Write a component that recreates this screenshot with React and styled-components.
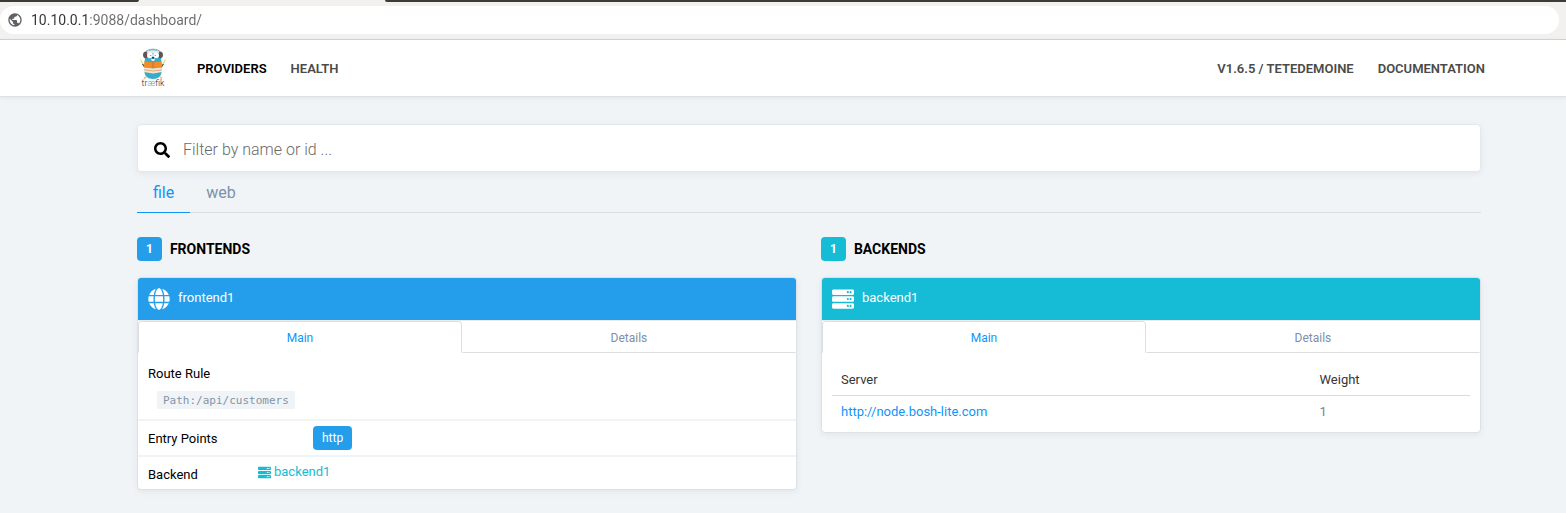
import React from "react";
import styled, { createGlobalStyle } from "styled-components";
import { FaSearch, FaServer, FaGlobe } from "react-icons/fa";
import { MdPublic } from "react-icons/md";

const BLUE = "#249eeb";
const LINK = "#0f95f9";
const TEAL = "#16bbd5";

const GlobalStyle = createGlobalStyle`
  *, *::before, *::after { box-sizing: border-box; }
  body {
    margin: 0;
    background: #f0f4f7;
    color: #000;
    font: 400 13px/20px Roboto, "Liberation Sans", sans-serif;
  }
  a { color: inherit; text-decoration: none; }
  h2, dl, dd { margin: 0; }
  button, input { font: inherit; border: 0; background: none; padding: 0; }
`;

/* Browser chrome */
const TabStrip = styled.div`
  display: flex;
  justify-content: space-between;
  height: 2px;
  background: #f2f1f0;
`;
const StripLeft = styled.div`
  width: 139px;
  background: #3c3b37;
  border-bottom-right-radius: 3px;
`;
const StripRight = styled.div`
  width: calc(100% - 385px);
  background: #3c3b37;
  border-bottom-left-radius: 3px;
`;
const AddressBar = styled.div`
  display: flex;
  height: 38px;
  padding: 4px 7px 5px 0;
  background: #f2f1f0;
  border-bottom: 1px solid #c9cbcd;
`;
const AddressField = styled.label`
  display: flex;
  flex: 1;
  align-items: center;
  gap: 8px;
  height: 28px;
  padding-left: 7px;
  background: #fff;
  border-radius: 14px;
  color: #5f6164;
`;
const AddressInput = styled.input`
  flex: 1;
  font: 400 14px/20px Roboto, "Noto Sans", sans-serif;
  color: #333;
  background: linear-gradient(to right, #333 58px, #6b6b6b 58px);
  background-clip: text;
  -webkit-text-fill-color: transparent;
  outline: 0;
`;

/* Top navigation */
const Nav = styled.nav`
  display: flex;
  align-items: center;
  height: 57px;
  padding: 0 69px 0 139px;
  background: #fff;
  border-bottom: 1px solid #dce1e5;
  box-shadow: 0 1px 4px #dfe4e8;
`;
const Brand = styled.a`
  display: flex;
  margin-right: 18px;
`;
const NavLink = styled.a`
  padding: 2px 12px 0;
  font-weight: 600;
  text-transform: uppercase;
  color: ${(p) => (p.$active ? "#000" : "#4a4a4a")};
`;
const Spacer = styled.div`
  flex: 1;
`;

/* Page */
const Main = styled.main`
  padding: 27px 85px 23px 137px;
`;
const Search = styled.label`
  display: flex;
  align-items: center;
  gap: 13px;
  height: 48px;
  padding: 4px 16px 0;
  background: #fff;
  border: 1px solid #e3e8eb;
  border-radius: 4px;
  box-shadow: 0 2px 6px #e1e6ea;
`;
const SearchInput = styled.input`
  flex: 1;
  font-size: 16px;
  font-weight: 300;
  line-height: 24px;
  outline: 0;
  &::placeholder { color: #6a6a6a; opacity: 1; }
`;
const ProviderTabs = styled.div`
  display: flex;
  border-bottom: 1px solid #d9dee2;
`;
const ProviderTab = styled.button`
  padding: 9px 16px 7px;
  margin-bottom: -1px;
  border-bottom: 1px solid ${(p) => (p.$active ? LINK : "transparent")};
  font-size: 16px;
  line-height: 24px;
  color: ${(p) => (p.$active ? LINK : "#7c90a8")};
`;
const Columns = styled.div`
  display: grid;
  grid-template-columns: 1fr 1fr;
  align-items: start;
  gap: 24px;
  padding-top: 24px;
`;
const Heading = styled.h2`
  display: flex;
  align-items: center;
  gap: 8px;
  margin-bottom: 16px;
  font-size: 14px;
  font-weight: 700;
  line-height: 24px;
  text-transform: uppercase;
`;
const Tag = styled.span`
  display: inline-block;
  padding: 0 9px;
  border-radius: 4px;
  background: ${(p) => p.$color};
  color: #fff;
  font-size: 12px;
  line-height: 24px;
`;
const Card = styled.article`
  background: #fff;
  border: 1px solid #dce1e5;
  border-radius: 4px;
  box-shadow: 0 2px 6px #e1e6ea;
  overflow: hidden;
`;
const CardHeader = styled.header`
  display: flex;
  align-items: center;
  gap: 8px;
  height: 43px;
  padding: 0 10px;
  background: ${(p) => p.$color};
  border-bottom: 1px solid #e8ecef;
  color: #fff;
`;
const CardTitle = styled.span`
  padding-bottom: 3px;
`;
const CardTabs = styled.div`
  display: flex;
`;
const CardTab = styled.button`
  flex: 1 1 auto;
  padding: 2px 12px 0;
  border: 1px solid #dbdbdb;
  border-color: ${(p) => (p.$active ? "#dce0e3 #dce0e3 transparent" : "transparent transparent #dbdfe2")};
  border-radius: ${(p) => (p.$active ? "4px 4px 0 0" : "0")};
  font-size: 12px;
  line-height: 28px;
  color: ${(p) => (p.$active ? LINK : "#7c90a8")};
`;
const Row = styled.div`
  display: flex;
  flex-direction: ${(p) => (p.$stacked ? "column" : "row")};
  align-items: ${(p) => (p.$stacked ? "flex-start" : "center")};
  gap: ${(p) => (p.$stacked ? "7px" : "0")};
  padding: ${(p) => (p.$stacked ? "9px 10px 10px" : "5px 10px")};
  & + & { border-top: 2px solid #f0f4f7; }
  &:last-child { padding-bottom: 3px; }
`;
const Term = styled.dt`
  width: ${(p) => p.$width || "auto"};
  padding-top: 2px;
`;
const Code = styled.code`
  display: block;
  margin-left: 9px;
  padding: 2px 6px 0;
  background: #f0f4f7;
  color: #8393a7;
  font: 11px/16px "DejaVu Sans Mono", monospace;
`;
const BackendLink = styled.a`
  display: flex;
  align-items: center;
  gap: 3px;
  padding-bottom: 4px;
  color: ${TEAL};
`;
const TableWrap = styled.div`
  padding: 10px 10px 4px;
`;
const Table = styled.table`
  width: 100%;
  table-layout: fixed;
  border-collapse: collapse;
  text-align: left;
`;
const Th = styled.th`
  width: ${(p) => p.$width};
  padding: 7px 9px 5px;
  border-bottom: 1px solid #dbdbdb;
  font-weight: 400;
  color: #363636;
`;
const Td = styled.td`
  padding: 6px 9px;
  color: #7c8590;
  a { color: ${LINK}; }
`;

const Logo = () => (
  <svg width="28" height="40" viewBox="0 0 28 40" role="img" aria-label="træfik">
    <path d="M7 29 5 30.500M21 29l2 1.500" stroke="#f3b98a" strokeWidth="1.600" />
    <path d="M14 1.500c6 0 8 4.500 8.200 10.500l.4 11.500c0 4.500-3.400 7.500-8.600 7.500s-8.600-3-8.600-7.500L5.800 12C6 6 8 1.500 14 1.500Z" fill="#36acc9" />
    <path d="M1.500 11.500 4.500 17M26.500 11.500 23.500 17" stroke="#dce36a" strokeWidth="1.200" />
    <path d="m3.500 16 2.500 3.500M24.500 16 22 19.500" stroke="#444" strokeWidth="1.200" />
    <path d="M6.500 4C9 .3 19 .3 21.500 4" fill="none" stroke="#999" strokeWidth="1" />
    <path d="M7.500 4C10 1.800 18 1.800 20.500 4L19 5.500H9Z" fill="#dfe8ec" />
    <path d="M4 7c0-3 2-4 4-3.500L7.600 10C5.500 10.500 4 9.500 4 7ZM24 7c0-3-2-4-4-3.500l.4 6.500C22.500 10.500 24 9.500 24 7Z" fill="#5b5658" />
    <path d="M7.700 6v4M20.300 6v4" stroke="#aa2b35" strokeWidth="1" />
    <circle cx="10.900" cy="7.300" r="2.900" fill="#fff" />
    <circle cx="17.100" cy="7.300" r="2.900" fill="#fff" />
    <circle cx="11.800" cy="7.600" r=".5" fill="#555" />
    <circle cx="16.200" cy="7.600" r=".5" fill="#555" />
    <ellipse cx="14" cy="11.500" rx="1.800" ry="1.500" fill="#f4f1ea" />
    <ellipse cx="14" cy="9.900" rx="1.300" ry=".8" fill="#222" />
    <path d="M5.300 13 14 14.500 22.700 13l.2 6.500L14 20.500 5.100 19.500Z" fill="#f28c28" />
    <path d="M14 14.500v6" stroke="#c9701f" />
    <path d="M5 19.500 14 20.500l9-1v4.500L14 25.500 5 24Z" fill="#f3e6d8" />
    <path d="M5.200 21.800 14 23l8.800-1.200" stroke="#eda56c" strokeWidth="1" fill="none" />
    <text x="14" y="38" textAnchor="middle" fontFamily="Roboto, sans-serif" fontSize="9" fontWeight="300" fill="#222">
      tr<tspan fill="#36acc9">æ</tspan>fik
    </text>
  </svg>
);

const CardTabBar = () => (
  <CardTabs role="tablist">
    <CardTab role="tab" aria-selected="true" $active>Main</CardTab>
    <CardTab role="tab" aria-selected="false">Details</CardTab>
  </CardTabs>
);

export default function App() {
  return (
    <>
      <GlobalStyle />
      <TabStrip>
        <StripLeft />
        <StripRight />
      </TabStrip>
      <AddressBar>
        <AddressField>
          <MdPublic size={16} aria-hidden="true" />
          <AddressInput aria-label="Address" defaultValue="10.10.0.1:9088/dashboard/" />
        </AddressField>
      </AddressBar>
      <Nav>
        <Brand href="#home"><Logo /></Brand>
        <NavLink href="#providers" $active>Providers</NavLink>
        <NavLink href="#health">Health</NavLink>
        <Spacer />
        <NavLink href="#version">V1.6.5 / tetedemoine</NavLink>
        <NavLink href="#docs">Documentation</NavLink>
      </Nav>
      <Main>
        <Search>
          <FaSearch size={16} aria-hidden="true" />
          <SearchInput type="text" aria-label="Filter" placeholder="Filter by name or id ..." />
        </Search>
        <ProviderTabs role="tablist">
          <ProviderTab role="tab" aria-selected="true" $active>file</ProviderTab>
          <ProviderTab role="tab" aria-selected="false">web</ProviderTab>
        </ProviderTabs>
        <Columns>
          <section>
            <Heading><Tag $color={BLUE}>1</Tag>Frontends</Heading>
            <Card>
              <CardHeader $color={BLUE}>
                <FaGlobe size={22} aria-hidden="true" />
                <CardTitle>frontend1</CardTitle>
              </CardHeader>
              <CardTabBar />
              <dl>
                <Row $stacked>
                  <Term>Route Rule</Term>
                  <dd><Code>Path:/api/customers</Code></dd>
                </Row>
                <Row>
                  <Term $width="165px">Entry Points</Term>
                  <dd><Tag $color={BLUE}>http</Tag></dd>
                </Row>
                <Row>
                  <Term $width="110px">Backend</Term>
                  <dd>
                    <BackendLink href="#backend1">
                      <FaServer size={13} aria-hidden="true" />
                      backend1
                    </BackendLink>
                  </dd>
                </Row>
              </dl>
            </Card>
          </section>
          <section>
            <Heading><Tag $color={TEAL}>1</Tag>Backends</Heading>
            <Card>
              <CardHeader $color={TEAL}>
                <FaServer size={22} aria-hidden="true" />
                <CardTitle>backend1</CardTitle>
              </CardHeader>
              <CardTabBar />
              <TableWrap>
                <Table>
                  <thead>
                    <tr>
                      <Th $width="75%">Server</Th>
                      <Th $width="25%">Weight</Th>
                    </tr>
                  </thead>
                  <tbody>
                    <tr>
                      <Td><a href="#server">http://node.bosh-lite.com</a></Td>
                      <Td>1</Td>
                    </tr>
                  </tbody>
                </Table>
              </TableWrap>
            </Card>
          </section>
        </Columns>
      </Main>
    </>
  );
}
